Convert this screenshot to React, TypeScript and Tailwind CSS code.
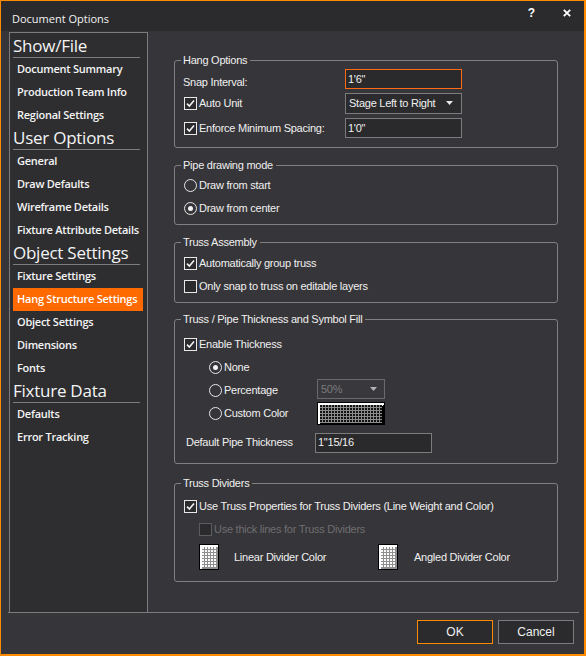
import { ReactNode } from 'react';

const sideItems: { heading: string; items: string[] }[] = [
  { heading: 'Show/File', items: ['Document Summary', 'Production Team Info', 'Regional Settings'] },
  { heading: 'User Options', items: ['General', 'Draw Defaults', 'Wireframe Details', 'Fixture Attribute Details'] },
  {
    heading: 'Object Settings',
    items: ['Fixture Settings', 'Hang Structure Settings', 'Object Settings', 'Dimensions', 'Fonts'],
  },
  { heading: 'Fixture Data', items: ['Defaults', 'Error Tracking'] },
];

const selected = 'Hang Structure Settings';

function CheckBox({ checked = false, disabled = false }: { checked?: boolean; disabled?: boolean }) {
  return (
    <span
      className={`w-[13px] h-[13px] shrink-0 border flex items-center justify-center bg-[#2b2b2d] ${
        disabled ? 'border-[#5c5c5e]' : 'border-[#e8e8e8]'
      }`}
    >
      {checked && (
        <svg width="9" height="9" viewBox="0 0 9 9">
          <path d="M1 4.6 L3.4 7 L8 1.6" stroke="#f2f2f2" strokeWidth="1.6" fill="none" />
        </svg>
      )}
    </span>
  );
}

function Radio({ checked = false }: { checked?: boolean }) {
  return (
    <span className="w-[13px] h-[13px] shrink-0 rounded-full border border-[#e8e8e8] flex items-center justify-center">
      {checked && <span className="w-[5px] h-[5px] rounded-full bg-[#f2f2f2]" />}
    </span>
  );
}

function TextBox({ value, active = false }: { value: string; active?: boolean }) {
  return (
    <div
      className={`w-[117px] h-[20px] border bg-[#2a2a2c] flex items-center pl-[2px] ${
        active ? 'border-[#ff6a14]' : 'border-[#7c7c7c]'
      }`}
    >
      {value}
    </div>
  );
}

function Caret({ color }: { color: string }) {
  return (
    <svg width="7" height="4" viewBox="0 0 7 4">
      <path d="M0 0 H7 L3.5 4 Z" fill={color} />
    </svg>
  );
}

function Group({ title, className = '', children }: { title: string; className?: string; children: ReactNode }) {
  return (
    <fieldset className={`w-[384px] border border-[#808080] rounded-[3px] ${className}`}>
      <legend className="ml-[6px] pl-[2px] pr-[3px] leading-[14px]">{title}</legend>
      {children}
    </fieldset>
  );
}

// hatched fill preview: grey grid over black cells
function FillSwatch() {
  return (
    <svg width="68" height="23" viewBox="0 0 68 23">
      <defs>
        <pattern id="fillgrid" x="3" y="3" width="3" height="3" patternUnits="userSpaceOnUse">
          <rect width="3" height="3" fill="#8c8c8c" />
          <rect width="2" height="2" fill="#111" />
        </pattern>
      </defs>
      <rect width="68" height="23" fill="#000" />
      <rect x="1" y="1" width="66" height="2" fill="#fff" />
      <rect x="1" y="1" width="2" height="21" fill="#fff" />
      <rect x="65" y="1" width="1" height="3" fill="#fff" />
      <rect x="3" y="3" width="62" height="18" fill="url(#fillgrid)" />
    </svg>
  );
}

function DividerSwatch({ id }: { id: string }) {
  return (
    <svg width="20" height="26" viewBox="0 0 20 26">
      <defs>
        <pattern id={id} x="3" y="3" width="3" height="3" patternUnits="userSpaceOnUse">
          <rect width="3" height="3" fill="#8e8e8e" />
          <rect width="2" height="2" fill="#fafafa" />
        </pattern>
      </defs>
      <rect width="20" height="26" fill="#000" />
      <rect x="1" y="1" width="18" height="24" fill="#fff" />
      <rect x="17" y="3" width="2" height="22" fill="#8e8e8e" />
      <rect x="3" y="23" width="16" height="2" fill="#8e8e8e" />
      <rect x="3" y="3" width="14" height="20" fill={`url(#${id})`} />
    </svg>
  );
}

function Sidebar() {
  return (
    <div className="ml-[8px] mt-[1px] w-[139px] border-l border-r border-t border-[#7c7c7c] bg-[#2e2e30] pt-[2px] pl-[3px] font-['Open_Sans',sans-serif] text-[#f4f4f4]">
      {sideItems.map((group) => (
        <div key={group.heading}>
          <div className="w-[127px] h-[23px] border-b border-[#7c7c7c] text-[17px] leading-[22px] whitespace-nowrap">
            {group.heading}
          </div>
          {group.items.map((item) => (
            <div
              key={item}
              className={`w-[130px] h-[23px] pl-[4px] text-[11px] font-semibold leading-[22px] whitespace-nowrap ${
                item === selected ? 'bg-[#ff6a00] text-white' : ''
              }`}
            >
              {item}
            </div>
          ))}
        </div>
      ))}
    </div>
  );
}

export default function App() {
  return (
    <div className="w-[586px] h-[656px] flex flex-col border-t border-l border-r-2 border-b-2 border-[#ff8a00] bg-[#363539] text-[#f0f0f0] text-[11px] tracking-[-0.25px] font-['Liberation_Sans',Arial,sans-serif] overflow-hidden">
      {/* Title bar */}
      <div className="h-[30px] shrink-0 bg-[#2b2b2d] flex items-start">
        <div className="ml-[11px] mt-[11px] leading-[14px] tracking-normal font-['Open_Sans',sans-serif] text-[#f4f4f4]">
          Document Options
        </div>
        <div className="ml-auto mt-[5px] text-[12px] font-bold leading-[14px] tracking-normal text-white">?</div>
        <svg className="ml-[28px] mr-[13px] mt-[8px]" width="8" height="8" viewBox="0 0 8 8">
          <path d="M0.8 0.8 L7.2 7.2 M7.2 0.8 L0.8 7.2" stroke="#fff" strokeWidth="1.8" />
        </svg>
      </div>

      {/* Body */}
      <div className="h-[581px] shrink-0 flex">
        <Sidebar />
        <div className="pl-[26px] pt-[22px] flex flex-col">
          <Group title="Hang Options">
            <div className="flex items-center h-[20px] mt-[2px] pl-[8px]">
              <span className="w-[162px] mt-[6px]">Snap Interval:</span>
              <TextBox value={'1\'6"'} active />
            </div>
            <div className="flex items-center h-[20px] mt-[4px] pl-[9px]">
              <div className="w-[161px] flex items-center gap-[2px]">
                <CheckBox checked />
                <span>Auto Unit</span>
              </div>
              <div className="w-[117px] h-[21px] border border-[#7c7c7c] bg-[#2b2b2d] flex items-center justify-between pl-[3px] pr-[8px]">
                <span>Stage Left to Right</span>
                <Caret color="#e6e6e6" />
              </div>
            </div>
            <div className="flex items-center h-[20px] mt-[5px] pl-[9px] mb-[9px]">
              <div className="w-[161px] flex items-center gap-[2px]">
                <CheckBox checked />
                <span>Enforce Minimum Spacing:</span>
              </div>
              <TextBox value={'1\'0"'} />
            </div>
          </Group>

          <Group title="Pipe drawing mode" className="mt-[10px]">
            <div className="pt-[2px] pb-[4px] pl-[9px]">
              <div className="h-[23px] flex items-center gap-[2px]">
                <Radio />
                <span>Draw from start</span>
              </div>
              <div className="h-[23px] flex items-center gap-[2px]">
                <Radio checked />
                <span>Draw from center</span>
              </div>
            </div>
          </Group>

          <Group title="Truss Assembly" className="mt-[10px]">
            <div className="pt-[3px] pb-[4px] pl-[9px]">
              <div className="h-[23px] flex items-center gap-[2px]">
                <CheckBox checked />
                <span>Automatically group truss</span>
              </div>
              <div className="h-[23px] flex items-center gap-[2px]">
                <CheckBox />
                <span>Only snap to truss on editable layers</span>
              </div>
            </div>
          </Group>

          <Group title="Truss / Pipe Thickness and Symbol Fill" className="mt-[9px]">
            <div className="pt-[7px] pb-[9px]">
              <div className="h-[23px] flex items-center gap-[2px] pl-[9px]">
                <CheckBox checked />
                <span>Enable Thickness</span>
              </div>
              <div className="h-[23px] flex items-center pl-[34px]">
                <div className="w-[108px] flex items-center gap-[2px]">
                  <Radio checked />
                  <span>None</span>
                </div>
              </div>
              <div className="h-[23px] flex items-center pl-[34px]">
                <div className="w-[108px] flex items-center gap-[2px]">
                  <Radio />
                  <span>Percentage</span>
                </div>
                <div className="self-start w-[68px] h-[20px] border border-[#6a6a6c] bg-[#39383c] flex items-center justify-between pl-[3px] pr-[7px] text-[#7a7a7c]">
                  <span>50%</span>
                  <Caret color="#b4b4b4" />
                </div>
              </div>
              <div className="h-[23px] flex items-center pl-[34px]">
                <div className="w-[108px] flex items-center gap-[2px]">
                  <Radio />
                  <span>Custom Color</span>
                </div>
                <FillSwatch />
              </div>
              <div className="h-[23px] flex items-center pl-[11px] mt-[6px]">
                <span className="w-[129px]">Default Pipe Thickness</span>
                <TextBox value={'1"15/16'} />
              </div>
            </div>
          </Group>

          <Group title="Truss Dividers" className="mt-[12px]">
            <div className="pt-[5px] pb-[11px]">
              <div className="h-[23px] flex items-center gap-[2px] pl-[9px]">
                <CheckBox checked />
                <span>Use Truss Properties for Truss Dividers (Line Weight and Color)</span>
              </div>
              <div className="h-[23px] flex items-center gap-[2px] pl-[24px] text-[#6e6e70]">
                <CheckBox disabled />
                <span>Use thick lines for Truss Dividers</span>
              </div>
              <div className="h-[26px] mt-[3px] flex items-center pl-[24px]">
                <div className="w-[179px] flex items-center gap-[15px]">
                  <DividerSwatch id="lin" />
                  <span>Linear Divider Color</span>
                </div>
                <div className="flex items-center gap-[16px]">
                  <DividerSwatch id="ang" />
                  <span>Angled Divider Color</span>
                </div>
              </div>
            </div>
          </Group>
        </div>
      </div>

      {/* Footer */}
      <div className="ml-[7px] w-[571px] h-[1px] shrink-0 bg-[#7c7c7c]" />
      <div className="flex justify-end gap-[5px] pt-[7px] pr-[10px]">
        <button className="w-[76px] h-[24px] border border-[#ff8a00] bg-[#2b2b2d] text-[#f0f0f0] text-[12px] tracking-normal">
          OK
        </button>
        <button className="w-[76px] h-[24px] border border-[#7c7c7c] bg-[#2b2b2d] text-[#f0f0f0] text-[12px] tracking-normal">
          Cancel
        </button>
      </div>
    </div>
  );
}
